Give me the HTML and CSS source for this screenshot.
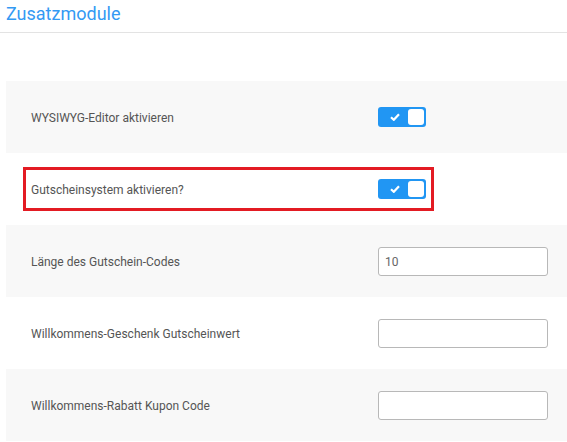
FILE: index.html
```html
<!DOCTYPE html>
<html lang="de">
<head>
<meta charset="utf-8">
<title>Zusatzmodule</title>
<link rel="stylesheet" href="styles.css">
</head>
<body>
<header class="head">
  <h1 class="title">Zusatzmodule</h1>
</header>
<main class="rows">
  <div class="row shaded">
    <div class="inner">
      <span class="label">WYSIWYG-Editor aktivieren</span>
      <span class="toggle">
        <svg class="check" width="10" height="8" viewBox="0 0 10 8"><path d="M1 4.2 L3.8 6.8 L9 1.2" fill="none" stroke="#fff" stroke-width="2.2"/></svg>
        <span class="knob"></span>
      </span>
    </div>
  </div>
  <div class="row">
    <div class="inner marked">
      <span class="label">Gutscheinsystem aktivieren?</span>
      <span class="toggle">
        <svg class="check" width="10" height="8" viewBox="0 0 10 8"><path d="M1 4.2 L3.8 6.8 L9 1.2" fill="none" stroke="#fff" stroke-width="2.2"/></svg>
        <span class="knob"></span>
      </span>
    </div>
  </div>
  <div class="row shaded">
    <div class="inner wide">
      <span class="label">Länge des Gutschein-Codes</span>
      <input class="field" type="text" value="10">
    </div>
  </div>
  <div class="row">
    <div class="inner wide">
      <span class="label">Willkommens-Geschenk Gutscheinwert</span>
      <input class="field" type="text" value="">
    </div>
  </div>
  <div class="row shaded">
    <div class="inner wide">
      <span class="label">Willkommens-Rabatt Kupon Code</span>
      <input class="field" type="text" value="">
    </div>
  </div>
</main>
</body>
</html>
```
FILE: styles.css
```css
html, body {
  margin: 0;
  padding: 0;
  background: #fff;
  font-family: Roboto, "Liberation Sans", sans-serif;
}
.head {
  height: 33px;
  border-bottom: 1px solid #e3e3e3;
  box-sizing: border-box;
}
.title {
  margin: 0;
  padding: 0 0 0 6px;
  font-size: 18px;
  font-weight: 400;
  line-height: 28px;
  color: #3399f3;
}
.rows {
  margin: 48px 0 0 6px;
}
.row {
  height: 72px;
  display: flex;
  align-items: center;
  padding-left: 17px;
}
.shaded {
  background: #f8f8f8;
}
.inner {
  width: 411px;
  box-sizing: border-box;
  display: flex;
  align-items: center;
  padding: 0 5px 0 5px;
  border: 3px solid transparent;
  height: 44px;
}
.inner.wide {
  width: auto;
}
.inner.marked {
  border-color: #e31b23;
}
.label {
  flex: 0 0 347px;
  font-size: 12px;
  color: #555;
  padding-top: 2px;
}
.toggle {
  width: 48px;
  height: 20px;
  background: #2196f3;
  border-radius: 3px;
  display: flex;
  align-items: center;
  box-sizing: border-box;
  padding: 0 2px 0 12px;
  justify-content: space-between;
}
.check {
  display: block;
}
.knob {
  width: 16px;
  height: 16px;
  background: #fff;
  border-radius: 3px;
}
.field {
  width: 170px;
  height: 29px;
  box-sizing: border-box;
  margin: 0;
  border: 1px solid #b8b8b8;
  border-radius: 3px;
  background: #fff;
  padding: 2px 6px 0;
  font-family: Roboto, "Liberation Sans", sans-serif;
  font-size: 12px;
  color: #666;
  outline: none;
}
```
